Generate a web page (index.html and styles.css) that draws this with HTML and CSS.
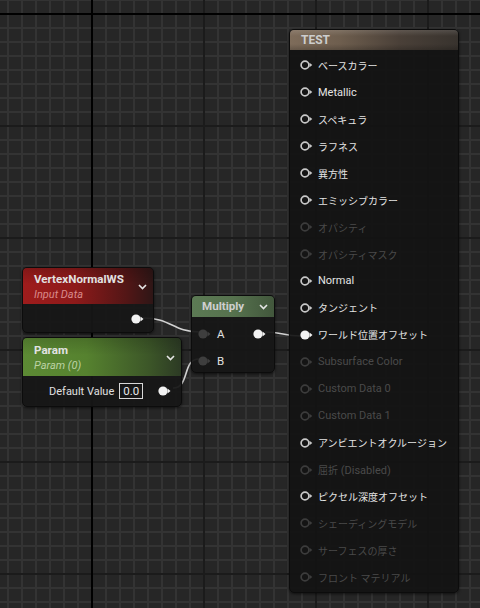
FILE: index.html
```html
<!DOCTYPE html>
<html lang="ja">
<head>
<meta charset="utf-8">
<link rel="stylesheet" href="styles.css">
</head>
<body>
<div class="canvas">
  <svg class="wires" width="480" height="608" viewBox="0 0 480 608">
    <path d="M143 318 C172 318 172 332 200 332" />
    <path d="M173 388 C190 388 182 359 199 359" />
    <path d="M265 332 C283 332 283 336 301 336" />
  </svg>

  <div class="node node-vertex">
    <div class="head head-red">
      <div class="titles">
        <div class="title">VertexNormalWS</div>
        <div class="subtitle sub-red">Input Data</div>
      </div>
      <svg class="chev" width="9" height="6" viewBox="0 0 9 6"><path d="M1 1 L4.5 4.5 L8 1"/></svg>
    </div>
    <div class="body body-out">
      <svg class="pin" width="13" height="10" viewBox="0 0 13 10"><circle cx="5" cy="5" r="4.6" class="fill"/><path d="M9.5 2.5 L12.5 5 L9.5 7.5 Z" class="fill"/></svg>
    </div>
  </div>

  <div class="node node-param">
    <div class="head head-green">
      <div class="titles">
        <div class="title">Param</div>
        <div class="subtitle sub-green">Param (0)</div>
      </div>
      <svg class="chev" width="9" height="6" viewBox="0 0 9 6"><path d="M1 1 L4.5 4.5 L8 1"/></svg>
    </div>
    <div class="body body-param">
      <span class="label">Default Value</span>
      <span class="valbox">0.0</span>
      <svg class="pin" width="13" height="10" viewBox="0 0 13 10"><circle cx="5" cy="5" r="4.6" class="fill"/><path d="M9.5 2.5 L12.5 5 L9.5 7.5 Z" class="fill"/></svg>
    </div>
  </div>

  <div class="node node-mul">
    <div class="head head-mul">
      <div class="title mul-title">Multiply</div>
      <svg class="chev" width="9" height="6" viewBox="0 0 9 6"><path d="M1 1 L4.5 4.5 L8 1"/></svg>
    </div>
    <div class="body body-mul">
      <div class="mrow">
        <div class="min">
          <svg class="pin" width="13" height="10" viewBox="0 0 13 10"><circle cx="5" cy="5" r="4.6" class="dark"/><path d="M9.5 2.5 L12.5 5 L9.5 7.5 Z" class="dark"/></svg>
          <span>A</span>
        </div>
        <svg class="pin" width="13" height="10" viewBox="0 0 13 10"><circle cx="5" cy="5" r="4.6" class="fill"/><path d="M9.5 2.5 L12.5 5 L9.5 7.5 Z" class="fill"/></svg>
      </div>
      <div class="mrow">
        <div class="min">
          <svg class="pin" width="13" height="10" viewBox="0 0 13 10"><circle cx="5" cy="5" r="4.6" class="dark"/><path d="M9.5 2.5 L12.5 5 L9.5 7.5 Z" class="dark"/></svg>
          <span>B</span>
        </div>
      </div>
    </div>
  </div>

  <div class="node node-test">
    <div class="head head-test"><div class="title test-title">TEST</div></div>
    <div class="test-body">
      <div class="row"><svg class="pin" width="13" height="10" viewBox="0 0 13 10"><circle cx="5" cy="5" r="3.9" class="ring"/><path d="M9.5 2.8 L12.3 5 L9.5 7.2 Z" class="rtri"/></svg><span class="ja">ベースカラー</span></div>
      <div class="row"><svg class="pin" width="13" height="10" viewBox="0 0 13 10"><circle cx="5" cy="5" r="3.9" class="ring"/><path d="M9.5 2.8 L12.3 5 L9.5 7.2 Z" class="rtri"/></svg><span>Metallic</span></div>
      <div class="row"><svg class="pin" width="13" height="10" viewBox="0 0 13 10"><circle cx="5" cy="5" r="3.9" class="ring"/><path d="M9.5 2.8 L12.3 5 L9.5 7.2 Z" class="rtri"/></svg><span class="ja">スペキュラ</span></div>
      <div class="row"><svg class="pin" width="13" height="10" viewBox="0 0 13 10"><circle cx="5" cy="5" r="3.9" class="ring"/><path d="M9.5 2.8 L12.3 5 L9.5 7.2 Z" class="rtri"/></svg><span class="ja">ラフネス</span></div>
      <div class="row"><svg class="pin" width="13" height="10" viewBox="0 0 13 10"><circle cx="5" cy="5" r="3.9" class="ring"/><path d="M9.5 2.8 L12.3 5 L9.5 7.2 Z" class="rtri"/></svg><span class="ja">異方性</span></div>
      <div class="row"><svg class="pin" width="13" height="10" viewBox="0 0 13 10"><circle cx="5" cy="5" r="3.9" class="ring"/><path d="M9.5 2.8 L12.3 5 L9.5 7.2 Z" class="rtri"/></svg><span class="ja">エミッシブカラー</span></div>
      <div class="row off"><svg class="pin" width="13" height="10" viewBox="0 0 13 10"><circle cx="5" cy="5" r="3.9" class="ring"/><path d="M9.5 2.8 L12.3 5 L9.5 7.2 Z" class="rtri"/></svg><span class="ja">オパシティ</span></div>
      <div class="row off"><svg class="pin" width="13" height="10" viewBox="0 0 13 10"><circle cx="5" cy="5" r="3.9" class="ring"/><path d="M9.5 2.8 L12.3 5 L9.5 7.2 Z" class="rtri"/></svg><span class="ja">オパシティマスク</span></div>
      <div class="row"><svg class="pin" width="13" height="10" viewBox="0 0 13 10"><circle cx="5" cy="5" r="3.9" class="ring"/><path d="M9.5 2.8 L12.3 5 L9.5 7.2 Z" class="rtri"/></svg><span>Normal</span></div>
      <div class="row"><svg class="pin" width="13" height="10" viewBox="0 0 13 10"><circle cx="5" cy="5" r="3.9" class="ring"/><path d="M9.5 2.8 L12.3 5 L9.5 7.2 Z" class="rtri"/></svg><span class="ja">タンジェント</span></div>
      <div class="row"><svg class="pin" width="13" height="10" viewBox="0 0 13 10"><circle cx="5" cy="5" r="4.6" class="fill"/><path d="M9.5 2.5 L12.5 5 L9.5 7.5 Z" class="fill"/></svg><span class="ja">ワールド位置オフセット</span></div>
      <div class="row off"><svg class="pin" width="13" height="10" viewBox="0 0 13 10"><circle cx="5" cy="5" r="3.9" class="ring"/><path d="M9.5 2.8 L12.3 5 L9.5 7.2 Z" class="rtri"/></svg><span>Subsurface Color</span></div>
      <div class="row off"><svg class="pin" width="13" height="10" viewBox="0 0 13 10"><circle cx="5" cy="5" r="3.9" class="ring"/><path d="M9.5 2.8 L12.3 5 L9.5 7.2 Z" class="rtri"/></svg><span>Custom Data 0</span></div>
      <div class="row off"><svg class="pin" width="13" height="10" viewBox="0 0 13 10"><circle cx="5" cy="5" r="3.9" class="ring"/><path d="M9.5 2.8 L12.3 5 L9.5 7.2 Z" class="rtri"/></svg><span>Custom Data 1</span></div>
      <div class="row"><svg class="pin" width="13" height="10" viewBox="0 0 13 10"><circle cx="5" cy="5" r="3.9" class="ring"/><path d="M9.5 2.8 L12.3 5 L9.5 7.2 Z" class="rtri"/></svg><span class="ja">アンビエントオクルージョン</span></div>
      <div class="row off"><svg class="pin" width="13" height="10" viewBox="0 0 13 10"><circle cx="5" cy="5" r="3.9" class="ring"/><path d="M9.5 2.8 L12.3 5 L9.5 7.2 Z" class="rtri"/></svg><span><span class="ja">屈折</span> (Disabled)</span></div>
      <div class="row"><svg class="pin" width="13" height="10" viewBox="0 0 13 10"><circle cx="5" cy="5" r="3.9" class="ring"/><path d="M9.5 2.8 L12.3 5 L9.5 7.2 Z" class="rtri"/></svg><span class="ja">ピクセル深度オフセット</span></div>
      <div class="row off"><svg class="pin" width="13" height="10" viewBox="0 0 13 10"><circle cx="5" cy="5" r="3.9" class="ring"/><path d="M9.5 2.8 L12.3 5 L9.5 7.2 Z" class="rtri"/></svg><span class="ja">シェーディングモデル</span></div>
      <div class="row off"><svg class="pin" width="13" height="10" viewBox="0 0 13 10"><circle cx="5" cy="5" r="3.9" class="ring"/><path d="M9.5 2.8 L12.3 5 L9.5 7.2 Z" class="rtri"/></svg><span class="ja">サーフェスの厚さ</span></div>
      <div class="row off"><svg class="pin" width="13" height="10" viewBox="0 0 13 10"><circle cx="5" cy="5" r="3.9" class="ring"/><path d="M9.5 2.8 L12.3 5 L9.5 7.2 Z" class="rtri"/></svg><span class="ja">フロント マテリアル</span></div>
    </div>
  </div>
</div>
</body>
</html>
```

FILE: styles.css
```css
html, body {
  margin: 0;
  padding: 0;
}
body {
  width: 480px;
  height: 608px;
  overflow: hidden;
  font-family: "Roboto", "Noto Sans CJK JP", sans-serif;
  font-size: 11px;
  color: #dcdcdc;
}
.canvas {
  position: relative;
  width: 480px;
  height: 608px;
  background-color: #262626;
  background-image:
    linear-gradient(90deg, #000 0 2px, transparent 2px),
    linear-gradient(180deg, #000 0 2px, transparent 2px),
    linear-gradient(90deg, #1b1b1b 0 2px, transparent 2px),
    linear-gradient(180deg, #1b1b1b 0 2px, transparent 2px),
    linear-gradient(90deg, #333 0 2px, transparent 2px),
    linear-gradient(180deg, #333 0 2px, transparent 2px);
  background-size:
    2px 100%,
    100% 2px,
    112px 112px,
    112px 112px,
    14px 14px,
    14px 14px;
  background-position:
    91px 0,
    0 13px,
    91px 0,
    0 13px,
    7px 0,
    0 13px;
  background-repeat:
    no-repeat,
    no-repeat,
    repeat,
    repeat,
    repeat,
    repeat;
}
.wires {
  position: absolute;
  left: 0;
  top: 0;
}
.wires path {
  fill: none;
  stroke: #d2d2d2;
  stroke-width: 1.6;
}
.node {
  position: absolute;
  border: 1px solid #0c0c0c;
  border-radius: 5px;
  background: rgba(22, 22, 22, 0.94);
  box-shadow: 0 1px 3px rgba(0, 0, 0, 0.6);
  overflow: hidden;
  box-sizing: border-box;
}
.head {
  display: flex;
  align-items: center;
  justify-content: space-between;
  box-sizing: border-box;
}
.titles {
  display: flex;
  flex-direction: column;
}
.title {
  font-weight: bold;
  font-size: 11.6px;
  color: #e2e2e2;
  line-height: 15px;
}
.subtitle {
  font-style: italic;
  font-size: 11px;
  line-height: 15px;
}
.sub-red { color: #d98a8a; }
.sub-green { color: #bcd2a4; }
.chev path {
  fill: none;
  stroke: #e6e6e6;
  stroke-width: 1.6;
}
.pin .fill { fill: #f2f2f2; }
.pin .dark { fill: #3e3e3e; }
.pin .ring { fill: none; stroke: #c8c8c8; stroke-width: 1.7; }
.pin .rtri { fill: #c8c8c8; }

/* VertexNormalWS */
.node-vertex {
  left: 22px;
  top: 267px;
  width: 132px;
  height: 66px;
}
.head-red {
  height: 36px;
  padding: 2px 6px 0 11px;
  background:
    linear-gradient(180deg, rgba(0,0,0,0.18) 0%, rgba(0,0,0,0) 45%),
    linear-gradient(90deg, #9e1c1c 0%, #8e1a1a 40%, #521616 80%, #2e1616 100%);
}
.body-out {
  display: flex;
  justify-content: flex-end;
  align-items: center;
  height: 29px;
  padding-right: 9px;
  padding-top: 1px;
  box-sizing: border-box;
}

/* Param */
.node-param {
  left: 22px;
  top: 337px;
  width: 160px;
  height: 70px;
}
.head-green {
  height: 38px;
  padding: 2px 6px 0 11px;
  background:
    linear-gradient(180deg, rgba(0,0,0,0.15) 0%, rgba(0,0,0,0) 45%),
    linear-gradient(90deg, #5c8a34 0%, #56822f 40%, #3c5628 80%, #2c3a24 100%);
}
.body-param {
  display: flex;
  align-items: center;
  height: 30px;
  padding-left: 26px;
  box-sizing: border-box;
}
.label {
  font-size: 11px;
  color: #e0e0e0;
}
.valbox {
  margin-left: 5px;
  border: 1px solid #d8d8d8;
  padding: 0 3px;
  height: 14px;
  line-height: 14px;
  font-size: 11.5px;
  color: #e8e8e8;
  width: 16px;
  text-align: center;
}
.body-param .pin {
  margin-left: 15px;
}

/* Multiply */
.node-mul {
  left: 191px;
  top: 295px;
  width: 84px;
  height: 78px;
}
.head-mul {
  height: 21px;
  padding: 0 6px 0 10px;
  background: linear-gradient(90deg, #5c7a54 0%, #56724e 50%, #42573c 100%);
}
.mul-title {
  color: #cfcfcf;
}
.body-mul {
  display: flex;
  flex-direction: column;
  padding-top: 3px;
}
.mrow {
  display: flex;
  align-items: center;
  justify-content: space-between;
  height: 27px;
  padding: 0 8px 0 6px;
}
.min {
  display: flex;
  align-items: center;
  gap: 6px;
  font-size: 11.5px;
  color: #e0e0e0;
}

/* TEST */
.node-test {
  left: 289px;
  top: 29px;
  width: 170px;
  height: 564px;
  background: rgba(18, 18, 18, 0.92);
}
.head-test {
  height: 20px;
  padding-left: 11px;
  background:
    linear-gradient(180deg, rgba(255,255,255,0.12) 0%, rgba(255,255,255,0) 30%, rgba(0,0,0,0) 70%, rgba(0,0,0,0.2) 100%),
    linear-gradient(90deg, #7e6c5a 0%, #6e5e4e 30%, #4a4038 65%, #38332e 100%);
}
.test-title {
  color: #cdcdcd;
  font-size: 12px;
}
.test-body {
  display: flex;
  flex-direction: column;
  padding-top: 2px;
}
.row {
  display: flex;
  align-items: center;
  height: 26.95px;
  padding-left: 10px;
  gap: 5px;
  color: #e4e4e4;
  white-space: nowrap;
}
.ja {
  font-size: 10px;
}
.row.off {
  color: #4a4a4a;
}
.row.off .ring { stroke: #3c3c3c; }
.row.off .rtri { fill: #3c3c3c; }
```
